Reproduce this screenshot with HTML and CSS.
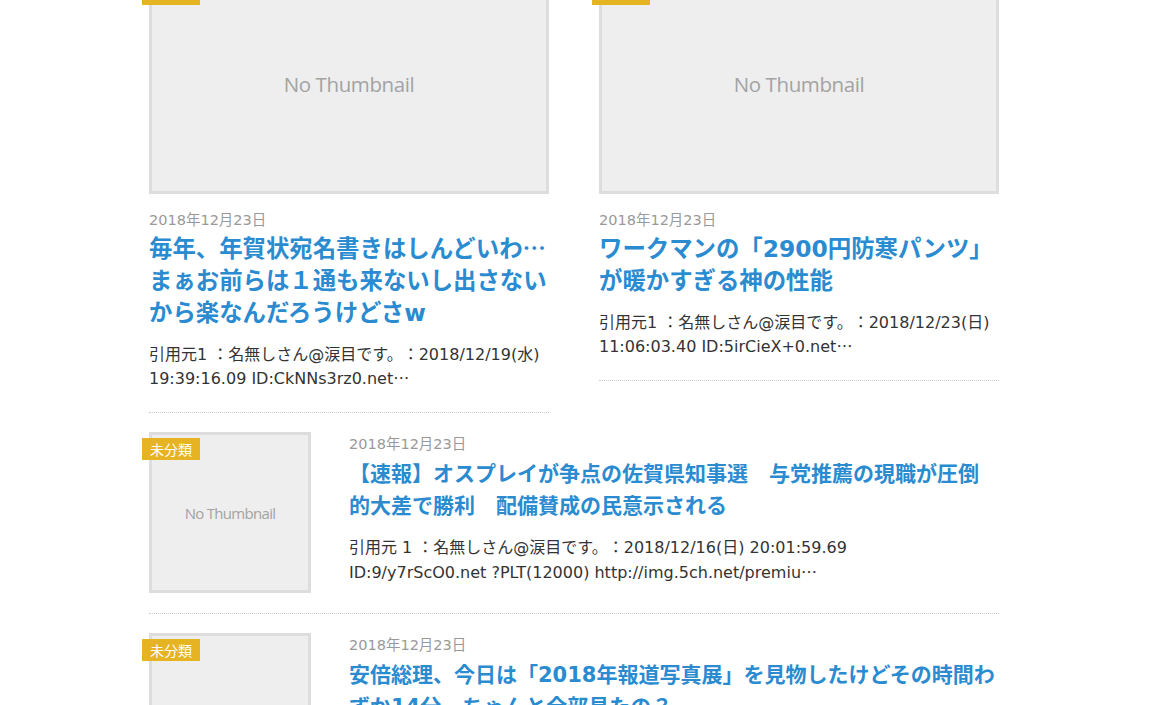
FILE: index.html
```html
<!DOCTYPE html>
<html lang="ja">
<head>
  <meta charset="UTF-8" />
  <meta name="viewport" content="width=device-width, initial-scale=1" />
  <title>新着記事</title>
  <link rel="stylesheet" href="styles.css">
</head>
<body>

<main class="page">

  <!-- 上段の大きいカード -->
  <div class="cards">
    <article class="card">
      <a class="thumb thumb-large" href="#">
        <span class="no-thumb">No Thumbnail</span>
        <span class="cat">未分類</span>
      </a>
      <div class="date">2018年12月23日</div>
      <h2 class="title"><a href="#">毎年、年賀状宛名書きはしんどいわ<span class="ell">…</span>まぁお前らは１通も来ないし出さないから楽なんだろうけどさw</a></h2>
      <p class="excerpt">引用元1 ：名無しさん@涙目です。：2018/12/19(水) 19:39:16.09 ID:CkNNs3rz0.net<span class="ell">…</span></p>
    </article>

    <article class="card">
      <a class="thumb thumb-large" href="#">
        <span class="no-thumb">No Thumbnail</span>
        <span class="cat">未分類</span>
      </a>
      <div class="date">2018年12月23日</div>
      <h2 class="title"><a href="#">ワークマンの「2900円防寒パンツ」が暖かすぎる神の性能</a></h2>
      <p class="excerpt">引用元1 ：名無しさん@涙目です。：2018/12/23(日) 11:06:03.40 ID:5irCieX+0.net<span class="ell">…</span></p>
    </article>
  </div>

  <!-- 一覧 -->
  <article class="entry">
    <a class="thumb thumb-small" href="#">
      <span class="no-thumb">No Thumbnail</span>
      <span class="cat">未分類</span>
    </a>
    <div class="entry-body">
      <div class="date">2018年12月23日</div>
      <h2 class="title"><a href="#">【速報】オスプレイが争点の佐賀県知事選　与党推薦の現職が圧倒的大差で勝利　配備賛成の民意示される</a></h2>
      <p class="excerpt">引用元 1 ：名無しさん@涙目です。：2018/12/16(日) 20:01:59.69<br>ID:9/y7rScO0.net ?PLT(12000) http://img.5ch.net/premiu<span class="ell">…</span></p>
    </div>
  </article>

  <article class="entry">
    <a class="thumb thumb-small" href="#">
      <span class="no-thumb">No Thumbnail</span>
      <span class="cat">未分類</span>
    </a>
    <div class="entry-body">
      <div class="date">2018年12月23日</div>
      <h2 class="title"><a href="#">安倍総理、今日は「2018年報道写真展」を見物したけどその時間わずか14分、ちゃんと全部見たの？</a></h2>
      <p class="excerpt">引用元 1 ：名無しさん@涙目です。：2018/12/23(日) 12:10:41.22<br>ID:Zp0QmVn10.net 安倍首相 報道写真展を見学<span class="ell">…</span></p>
    </div>
  </article>

</main>

</body>
</html>
```

FILE: styles.css
```css
body {
  margin: 0;
  background: #fff;
  color: #333;
  font-family: "DejaVu Sans", "Noto Sans CJK JP", sans-serif;
  text-spacing-trim: space-all;
  overflow: hidden;
}
a {
  text-decoration: none;
}
.ell {
  font-family: "Noto Sans CJK JP", sans-serif;
  line-height: 1;
}
.page {
  width: 850px;
  padding-left: 149px;
}
.cards {
  display: grid;
  grid-template-columns: 400px 400px;
  column-gap: 50px;
  align-items: start;
  margin-top: -23px;
  margin-bottom: 19px;
}
.card {
  padding-bottom: 21px;
  border-bottom: 1px dotted #ccc;
}
.thumb {
  position: relative;
  display: flex;
  align-items: center;
  justify-content: center;
  box-sizing: border-box;
  background: #eee;
  border: 3px solid #ddd;
}
.thumb-large {
  width: 400px;
  height: 217px;
}
.thumb-small {
  flex: none;
  width: 162px;
  height: 161px;
}
.no-thumb {
  color: #a3a3a3;
  font-family: "Open Sans", sans-serif;
  letter-spacing: -0.4px;
}
.thumb-large .no-thumb {
  font-size: 20.5px;
  margin-top: -3px;
}
.thumb-small .no-thumb {
  font-size: 15px;
  letter-spacing: -0.7px;
}
.cat {
  position: absolute;
  top: 3px;
  left: -10px;
  height: 22px;
  line-height: 22px;
  padding: 0 8px;
  background: #e6b422;
  color: #fff;
  font-family: "Noto Sans CJK JP", sans-serif;
  font-size: 14px;
}
.card .cat {
  line-height: 16px;
}
.date {
  color: #999;
  font-size: 14.5px;
  line-height: 21px;
}
.card .date {
  margin-top: 16px;
}
.title {
  margin: 2px 0 0;
  font-weight: bold;
}
.title a {
  color: #2a8bd0;
}
.card .title {
  font-size: 23.4px;
  line-height: 32px;
}
.excerpt {
  margin: 13px 0 0;
  font-size: 16px;
  line-height: 24px;
}
.card .excerpt {
  margin-top: 14px;
}
.entry {
  display: flex;
  gap: 38px;
  padding-bottom: 20px;
  margin-bottom: 19px;
  border-bottom: 1px dotted #ccc;
}
.entry-body {
  flex: 1;
}
.entry .date {
  margin-top: 2px;
}
.entry .title {
  margin-top: 4px;
  font-size: 21px;
  line-height: 31.5px;
}
.entry .excerpt {
  line-height: 25px;
}
```
